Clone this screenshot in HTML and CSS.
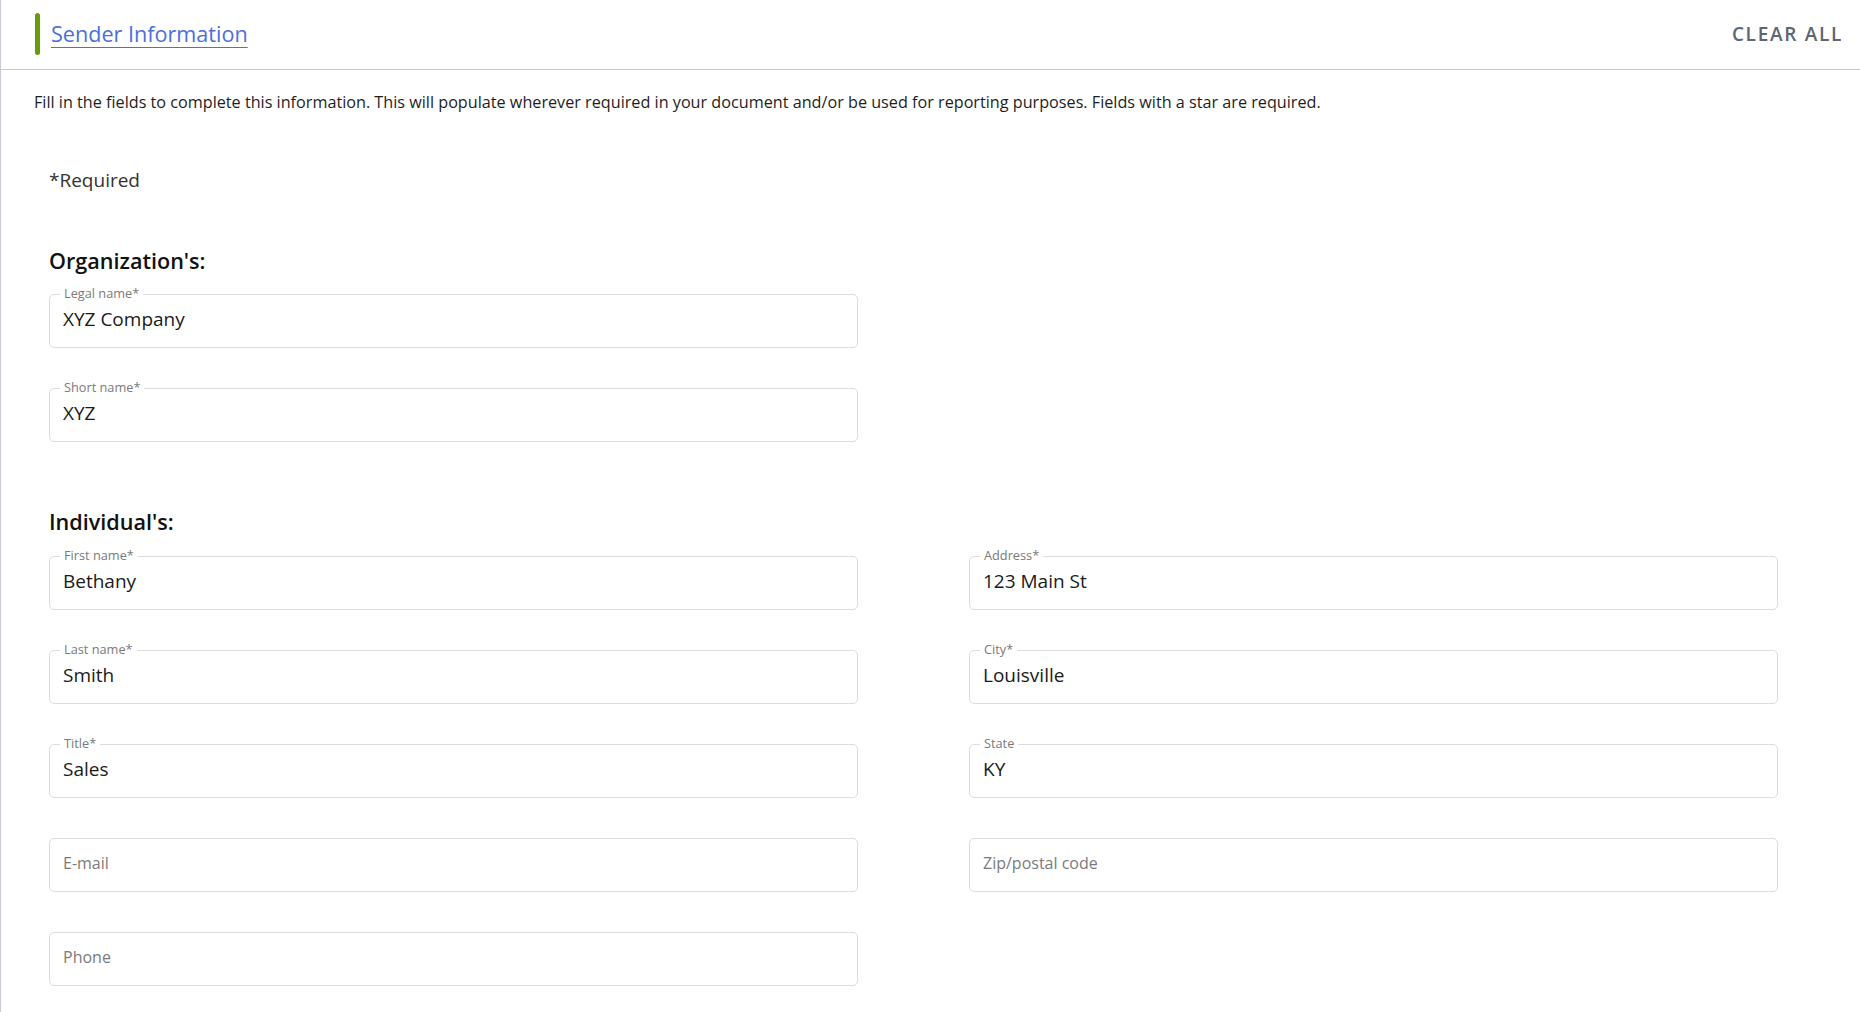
FILE: index.html
```html
<!DOCTYPE html>
<html lang="en">
<head>
<meta charset="utf-8">
<title>Sender Information</title>
<link rel="stylesheet" href="styles.css">
</head>
<body>
<div class="page">
  <header class="topbar">
    <span class="accent"></span>
    <a class="title" href="#">Sender Information</a>
    <button class="clear" type="button">CLEAR ALL</button>
  </header>

  <p class="desc">Fill in the fields to complete this information. This will populate wherever required in your document and/or be used for reporting purposes. Fields with a star are required.</p>

  <div class="form">
    <div class="required">*Required</div>

    <h2 class="heading heading-org">Organization's:</h2>
    <div class="col">
      <div class="field"><span class="label">Legal name*</span><span class="value">XYZ Company</span></div>
      <div class="field"><span class="label">Short name*</span><span class="value">XYZ</span></div>
    </div>

    <h2 class="heading heading-ind">Individual's:</h2>
    <div class="grid">
      <div class="col">
        <div class="field"><span class="label">First name*</span><span class="value">Bethany</span></div>
        <div class="field"><span class="label">Last name*</span><span class="value">Smith</span></div>
        <div class="field"><span class="label">Title*</span><span class="value">Sales</span></div>
        <div class="field"><span class="placeholder">E-mail</span></div>
        <div class="field"><span class="placeholder">Phone</span></div>
      </div>
      <div class="col">
        <div class="field"><span class="label">Address*</span><span class="value">123 Main St</span></div>
        <div class="field"><span class="label">City*</span><span class="value">Louisville</span></div>
        <div class="field"><span class="label">State</span><span class="value">KY</span></div>
        <div class="field"><span class="placeholder">Zip/postal code</span></div>
      </div>
    </div>
  </div>
</div>
</body>
</html>
```

FILE: styles.css
```css
* { box-sizing: border-box; }

html, body {
  margin: 0;
  padding: 0;
  background: #ffffff;
}

body {
  font-family: "Open Sans", "Noto Sans", "Liberation Sans", sans-serif;
  color: #1c1c1c;
}

.page {
  min-height: 100vh;
  border-left: 1px solid #c8cbd2;
}

.topbar {
  height: 70px;
  border-bottom: 1px solid #c8c9ce;
  display: flex;
  align-items: center;
  padding: 0 17px 1px 34px;
}

.accent {
  width: 5px;
  height: 42px;
  border-radius: 3px;
  background: #669b0c;
  flex: none;
}

.title {
  margin-left: 11px;
  font-size: 21.6px;
  line-height: 30px;
  color: #4b6fdc;
  text-decoration: underline;
  text-decoration-thickness: 1px;
  text-underline-offset: 5px;
}

.clear {
  margin-left: auto;
  border: 0;
  background: none;
  padding: 0;
  font-family: inherit;
  font-size: 19px;
  font-weight: 600;
  letter-spacing: 1.7px;
  color: #5d6671;
  line-height: 30px;
  cursor: pointer;
}

.desc {
  margin: 21px 0 0 33px;
  font-size: 16.2px;
  line-height: 22px;
  color: #1e1e1e;
}

.form {
  padding: 0 0 24px 48px;
}

.required {
  margin-top: 55px;
  font-size: 19px;
  line-height: 25px;
  color: #333333;
}

.heading {
  margin: 0;
  font-size: 21.6px;
  line-height: 30px;
  font-weight: 600;
  color: #111111;
}

.heading-org { margin-top: 53px; }
.heading-ind { margin-top: 65px; }

.col {
  width: 809px;
  display: flex;
  flex-direction: column;
  gap: 40px;
  margin-top: 18px;
}

.grid {
  display: grid;
  grid-template-columns: 809px 809px;
  column-gap: 111px;
  margin-top: 19px;
  align-items: start;
}

.grid .col { margin-top: 0; }

.field {
  position: relative;
  height: 54px;
  border: 1px solid #dcdcdc;
  border-radius: 5px;
  display: flex;
  align-items: center;
  padding: 0 13px 4px 13px;
}

.label {
  position: absolute;
  top: -10px;
  left: 10px;
  padding: 0 4px;
  background: #ffffff;
  font-size: 12.75px;
  line-height: 16px;
  color: #7a7a7a;
}

.value {
  font-size: 19px;
  line-height: 26px;
  color: #1a1a1a;
}

.placeholder {
  font-size: 16px;
  line-height: 22px;
  color: #7b7b7b;
  padding-top: 0;
}
```
